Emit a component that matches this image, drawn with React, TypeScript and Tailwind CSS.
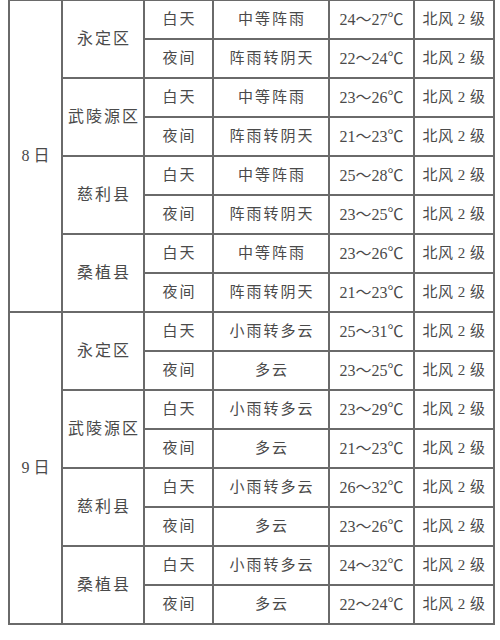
import React from "react";

type Slot = { weather: string; temp: string };
type District = { name: string; day: Slot; night: Slot };
type Day = { label: string; districts: District[] };

const WIND = "北风 2 级";

const days: Day[] = [
  {
    label: "8 日",
    districts: [
      { name: "永定区", day: { weather: "中等阵雨", temp: "24～27℃" }, night: { weather: "阵雨转阴天", temp: "22～24℃" } },
      { name: "武陵源区", day: { weather: "中等阵雨", temp: "23～26℃" }, night: { weather: "阵雨转阴天", temp: "21～23℃" } },
      { name: "慈利县", day: { weather: "中等阵雨", temp: "25～28℃" }, night: { weather: "阵雨转阴天", temp: "23～25℃" } },
      { name: "桑植县", day: { weather: "中等阵雨", temp: "23～26℃" }, night: { weather: "阵雨转阴天", temp: "21～23℃" } },
    ],
  },
  {
    label: "9 日",
    districts: [
      { name: "永定区", day: { weather: "小雨转多云", temp: "25～31℃" }, night: { weather: "多云", temp: "23～25℃" } },
      { name: "武陵源区", day: { weather: "小雨转多云", temp: "23～29℃" }, night: { weather: "多云", temp: "21～23℃" } },
      { name: "慈利县", day: { weather: "小雨转多云", temp: "26～32℃" }, night: { weather: "多云", temp: "23～26℃" } },
      { name: "桑植县", day: { weather: "小雨转多云", temp: "24～32℃" }, night: { weather: "多云", temp: "22～24℃" } },
    ],
  },
];

const cell = "border-2 border-[#6a6a6a] h-[39px] p-0 text-center align-middle";
const cjk = "tracking-[2px] pl-[2px]";

export default function App() {
  return (
    <div
      className="h-[640px] w-[500px] overflow-hidden bg-white text-[15px] text-[#4a4a4a]"
      style={{ fontFamily: '"Liberation Serif", "Noto Sans CJK SC", serif' }}
    >
      <table className="-mt-[1px] ml-[8px] table-fixed border-collapse">
        <colgroup>
          <col className="w-[53px]" />
          <col className="w-[82px]" />
          <col className="w-[69px]" />
          <col className="w-[116px]" />
          <col className="w-[85px]" />
          <col className="w-[80px]" />
        </colgroup>
        <tbody>
          {days.map((d) =>
            d.districts.map((dist, i) => (
              <React.Fragment key={`${d.label}-${dist.name}`}>
                <tr>
                  {i === 0 && (
                    <td rowSpan={8} className={`${cell} text-[16px]`}>
                      {d.label}
                    </td>
                  )}
                  <td rowSpan={2} className={`${cell} ${cjk} text-[16px]`}>
                    {dist.name}
                  </td>
                  <td className={`${cell} ${cjk}`}>白天</td>
                  <td className={`${cell} ${cjk}`}>{dist.day.weather}</td>
                  <td className={`${cell} text-[16px]`}>{dist.day.temp}</td>
                  <td className={`${cell} tracking-[0.5px]`}>{WIND}</td>
                </tr>
                <tr>
                  <td className={`${cell} ${cjk}`}>夜间</td>
                  <td className={`${cell} ${cjk}`}>{dist.night.weather}</td>
                  <td className={`${cell} text-[16px]`}>{dist.night.temp}</td>
                  <td className={`${cell} tracking-[0.5px]`}>{WIND}</td>
                </tr>
              </React.Fragment>
            ))
          )}
        </tbody>
      </table>
    </div>
  );
}
